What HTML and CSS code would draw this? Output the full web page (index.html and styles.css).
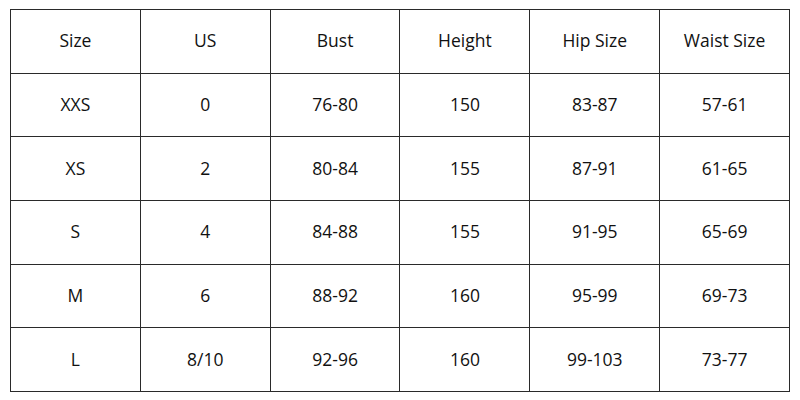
FILE: index.html
```html
<!DOCTYPE html>
<html>
<head>
<meta charset="utf-8">
<link rel="stylesheet" href="styles.css">
</head>
<body>
<div class="wrap">
<table class="size-table">
<tr><td>Size</td><td>US</td><td>Bust</td><td>Height</td><td>Hip Size</td><td>Waist Size</td></tr>
<tr><td>XXS</td><td>0</td><td>76-80</td><td>150</td><td>83-87</td><td>57-61</td></tr>
<tr><td>XS</td><td>2</td><td>80-84</td><td>155</td><td>87-91</td><td>61-65</td></tr>
<tr><td>S</td><td>4</td><td>84-88</td><td>155</td><td>91-95</td><td>65-69</td></tr>
<tr><td>M</td><td>6</td><td>88-92</td><td>160</td><td>95-99</td><td>69-73</td></tr>
<tr><td>L</td><td>8/10</td><td>92-96</td><td>160</td><td>99-103</td><td>73-77</td></tr>
</table>
</div>
</body>
</html>
```

FILE: styles.css
```css
html, body {
  margin: 0;
  padding: 0;
  background: #fff;
}
.wrap {
  padding: 9px 11px 8px 10px;
}
.size-table {
  width: 780px;
  height: 383px;
  border-collapse: collapse;
  table-layout: fixed;
  font-family: "Open Sans", sans-serif;
  font-size: 17.5px;
  color: #111;
}
.size-table td {
  border: 1px solid #2a2a2a;
  text-align: center;
  vertical-align: middle;
  padding: 0 0 2px 0;
}
```
